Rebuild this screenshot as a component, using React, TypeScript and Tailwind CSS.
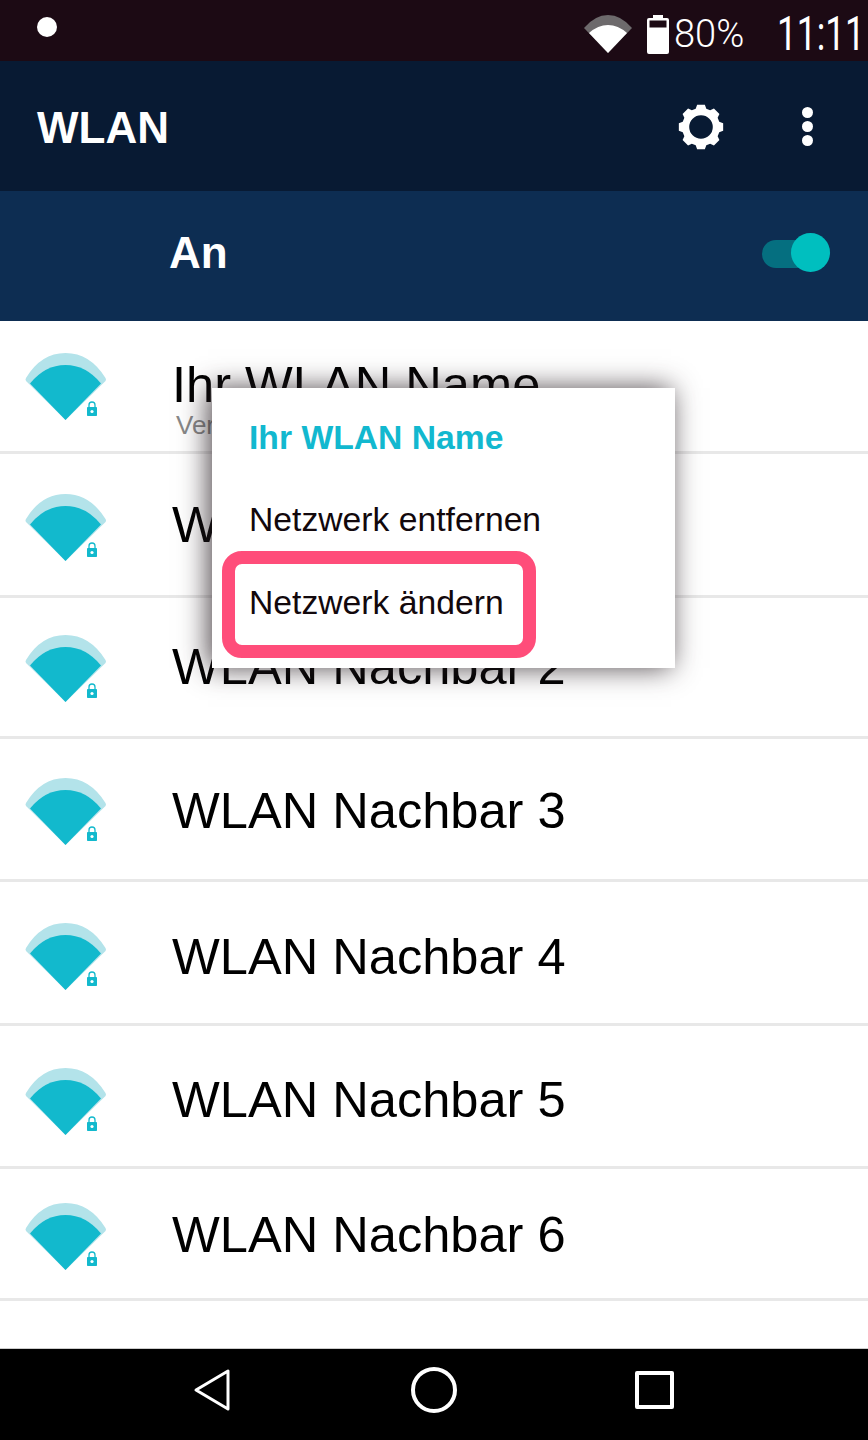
const rows = [
  { name: 'Ihr WLAN Name', row: 'h-[133px]', icon: 'mt-[32px]', text: 'pt-[35px]', sub: 'Verbunden' },
  { name: 'WLAN Nachbar 1', row: 'h-[144px]', icon: 'mt-[40px]', text: 'pt-[42px]' },
  { name: 'WLAN Nachbar 2', row: 'h-[141px]', icon: 'mt-[37px]', text: 'pt-[40px]' },
  { name: 'WLAN Nachbar 3', row: 'h-[143px]', icon: 'mt-[39px]', text: 'pt-[43px]' },
  { name: 'WLAN Nachbar 4', row: 'h-[144px]', icon: 'mt-[41px]', text: 'pt-[46px]' },
  { name: 'WLAN Nachbar 5', row: 'h-[143px]', icon: 'mt-[42px]', text: 'pt-[45px]' },
  { name: 'WLAN Nachbar 6', row: 'h-[132px]', icon: 'mt-[34px]', text: 'pt-[37px]' },
]

function gearPath() {
  const cx = 24
  const cy = 24
  const teeth = 8
  const pts: string[] = []
  for (let i = 0; i < teeth; i++) {
    const a = (i / teeth) * Math.PI * 2 - Math.PI / 2
    const step = (Math.PI * 2) / teeth
    const list = [
      [19, a - step * 0.36],
      [22.5, a - step * 0.22],
      [22.5, a + step * 0.22],
      [19, a + step * 0.36],
    ]
    for (const [r, t] of list) {
      pts.push(`${(cx + r * Math.cos(t)).toFixed(2)} ${(cy + r * Math.sin(t)).toFixed(2)}`)
    }
  }
  return `M${pts.join('L')}Z M24 12.2a11.8 11.8 0 1 0 0 23.6a11.8 11.8 0 1 0 0-23.6Z`
}

function WifiLock() {
  return (
    <svg width="84" height="68" viewBox="25 353 84 68" className="block">
      <path
        d="M65.5 420 L26 381 Q25 379.5 26 378 Q41 353 65.5 353 Q90 353 105.5 378 Q106.5 379.5 105.5 381 Z"
        fill="#b3e3ea"
      />
      <path d="M65.5 420 L30 383.5 Q45 365 65.5 365 Q86 365 101 383.5 Z" fill="#12b9cd" />
      <rect x="87" y="407" width="10" height="9" rx="0.8" fill="#12b9cd" />
      <path d="M89 407v-2a3 3 0 0 1 6 0v2" fill="none" stroke="#12b9cd" strokeWidth="1.3" />
      <circle cx="92" cy="411.5" r="1.6" fill="#fff" />
    </svg>
  )
}

export default function App() {
  return (
    <div className="relative h-[1440px] w-[868px] overflow-hidden bg-white font-['Liberation_Sans',Arial,sans-serif]">
      {/* status bar */}
      <div className="flex h-[61px] items-center bg-[#1c0a14] text-white">
        <div className="ml-[37px] mb-[7px] h-[20px] w-[20px] shrink-0 rounded-full bg-white" />
        <svg width="50" height="40" viewBox="0 0 50 40" className="ml-[526px] mb-[-6px] shrink-0">
          <path d="M25 39 L1 14 Q12 1 25 1 Q38 1 49 14 Z" fill="#6d6a6c" />
          <path d="M25 39 L6 19 Q15 11 25 11 Q35 11 44 19 Z" fill="#fff" />
        </svg>
        <svg width="22" height="40" viewBox="0 0 22 40" className="ml-[14px] mb-[-6px] shrink-0">
          <path d="M6 1h10v3h4a2 2 0 0 1 2 2v32a2 2 0 0 1-2 2H2a2 2 0 0 1-2-2V6a2 2 0 0 1 2-2h4Z" fill="#fff" />
          <rect x="2.5" y="6.5" width="17" height="7" fill="#1c0a14" />
        </svg>
        <span className="ml-[5px] mt-[6px] font-['Roboto',sans-serif] text-[38px] font-light leading-none">
          80%
        </span>
        <span className="ml-[33px] mt-[6px] inline-block origin-left scale-x-[0.72] font-['Roboto',sans-serif] text-[49px] font-normal leading-none whitespace-nowrap">
          11:11
        </span>
      </div>

      {/* app bar */}
      <div className="flex h-[130px] items-center bg-[#081a33] text-white">
        <span className="ml-[37px] mt-[3px] text-[44px] font-bold leading-none">WLAN</span>
        <svg width="48" height="48" viewBox="0 0 48 48" className="ml-[508px] mt-[2px]">
          <path d={gearPath()} fill="#fff" fillRule="evenodd" />
        </svg>
        <div className="ml-[77px] flex flex-col gap-[3px]">
          <div className="h-[11px] w-[11px] rounded-full bg-white" />
          <div className="h-[11px] w-[11px] rounded-full bg-white" />
          <div className="h-[11px] w-[11px] rounded-full bg-white" />
        </div>
      </div>

      {/* switch bar */}
      <div className="flex h-[130px] items-center bg-[#0d2d52] text-white">
        <span className="ml-[169px] mt-[-6px] text-[44px] font-bold leading-none">An</span>
        <div className="relative ml-[534px] mt-[-4px] h-[28px] w-[54px] rounded-full bg-[#056f80]">
          <div className="absolute left-[29px] top-[-7px] h-[39px] w-[39px] rounded-full bg-[#00bfbf]" />
        </div>
      </div>

      {/* network list */}
      <div>
        {rows.map((r) => (
          <div key={r.name} className={`flex border-b-[3px] border-[#e8e8e8] ${r.row}`}>
            <div className={`ml-[25px] shrink-0 ${r.icon}`}>
              <WifiLock />
            </div>
            <div className={`ml-[63px] ${r.text}`}>
              <div className="text-[50.6px] leading-[58px] whitespace-nowrap text-black">{r.name}</div>
              {r.sub && <div className="ml-[4px] mt-[-4px] text-[26px] leading-[30px] text-[#888]">{r.sub}</div>}
            </div>
          </div>
        ))}
      </div>

      {/* nav bar */}
      <div className="absolute bottom-0 left-0 flex h-[92px] w-full items-center border-t border-[#ccc] bg-black pb-[9px] pl-[193px]">
        <svg width="40" height="44" viewBox="0 0 40 44" className="shrink-0">
          <path d="M3 22 L35 3 V41 Z" fill="none" stroke="#fff" strokeWidth="3" strokeLinejoin="round" />
        </svg>
        <div className="ml-[178px] h-[46px] w-[46px] rounded-full border-4 border-white" />
        <div className="ml-[178px] h-[38px] w-[39px] rounded-[2px] border-4 border-white" />
      </div>

      {/* context menu */}
      <div className="absolute left-[212px] top-[388px] h-[280px] w-[463px] bg-white pl-[37px] pt-[29px] shadow-[-4px_0px_26px_rgba(40,30,35,0.8)]">
        <div className="text-[33.7px] font-bold leading-[40px] text-[#12b8cf]">Ihr WLAN Name</div>
        <div className="mt-[42px] text-[33.7px] leading-[40px] text-[#12080c] whitespace-nowrap">Netzwerk entfernen</div>
        <div className="mt-[43px] text-[33.7px] leading-[40px] text-[#12080c] whitespace-nowrap">Netzwerk ändern</div>
        <div className="absolute left-[10px] top-[163px] h-[107px] w-[314px] rounded-[20px] border-[13px] border-[#ff4d7a]" />
      </div>
    </div>
  )
}
